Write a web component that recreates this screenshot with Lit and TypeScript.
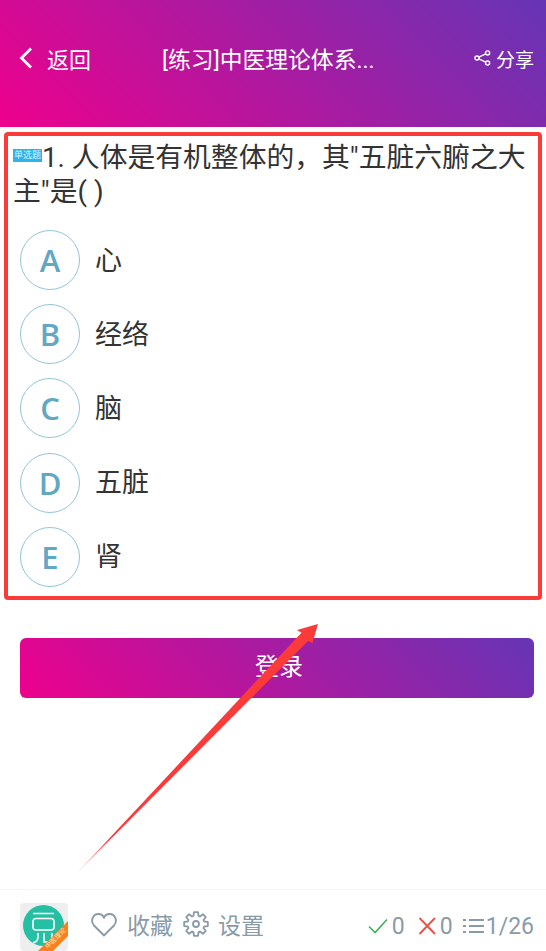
import { LitElement, html, css } from 'lit';
import { customElement } from 'lit/decorators.js';

const OPTIONS = [
  ['A', '心'],
  ['B', '经络'],
  ['C', '脑'],
  ['D', '五脏'],
  ['E', '肾'],
];

// cog outline, 8 teeth
function gearPath(cx: number, cy: number, outer: number, inner: number) {
  const pts: string[] = [];
  for (let i = 0; i < 8; i++) {
    const a = (i * Math.PI) / 4 - Math.PI / 2;
    for (const [off, r] of [
      [-0.3, inner],
      [-0.17, outer],
      [0.17, outer],
      [0.3, inner],
    ]) {
      pts.push(`${(cx + r * Math.cos(a + off)).toFixed(2)} ${(cy + r * Math.sin(a + off)).toFixed(2)}`);
    }
  }
  return `M${pts.join('L')}Z`;
}

@customElement('app-root')
export class AppRoot extends LitElement {
  static styles = css`
    :host {
      display: block;
      position: relative;
      width: 546px;
      height: 951px;
      overflow: hidden;
      background: #fff;
      font-family: Roboto, "Noto Sans CJK SC", sans-serif;
      color: #333;
    }
    .page {
      display: flex;
      flex-direction: column;
      height: 951px;
    }
    .header {
      flex: none;
      height: 127px;
      box-sizing: border-box;
      padding: 0 12px 11px 18px;
      display: flex;
      align-items: center;
      color: #fff;
      background: linear-gradient(45deg, #ee008c, #6535b5);
    }
    .back {
      display: flex;
      align-items: center;
      gap: 13px;
      width: 144px;
      font-size: 22px;
    }
    .title {
      flex: 1;
      font-size: 22.8px;
      white-space: nowrap;
    }
    .share {
      display: flex;
      align-items: center;
      gap: 5px;
      font-size: 19px;
    }
    .question {
      flex: none;
      padding: 14px 13px 0;
      font-size: 27.8px;
      line-height: 34px;
      height: 91px;
      box-sizing: border-box;
    }
    .tag {
      display: inline-block;
      width: 29px;
      height: 13px;
      line-height: 13px;
      font-size: 9px;
      text-align: center;
      color: #d8f1fb;
      background: #2fb4ea;
      vertical-align: 9px;
    }
    .options {
      flex: none;
      display: flex;
      flex-direction: column;
      gap: 14.2px;
      padding: 12px 20px 0;
    }
    .option {
      display: flex;
      align-items: center;
      gap: 15px;
      font-size: 27px;
      line-height: 56px;
      color: #333;
    }
    .option-text {
      padding-top: 1px;
    }
    .letter {
      width: 60px;
      height: 60px;
      box-sizing: border-box;
      border: 1px solid #92c5d6;
      border-radius: 50%;
      display: flex;
      align-items: center;
      justify-content: center;
      font-family: "Open Sans", sans-serif;
      font-weight: 600;
      font-size: 31px;
      line-height: 60px;
      color: #62a8c3;
    }
    .login {
      flex: none;
      margin: 51px 12px 0 20px;
      height: 60px;
      box-sizing: border-box;
      padding: 0 0 7px 4px;
      border-radius: 6px;
      display: flex;
      align-items: center;
      justify-content: center;
      font-size: 24px;
      color: #fff;
      background: linear-gradient(45deg, #ee008c, #6535b5);
    }
    .footer {
      margin-top: auto;
      flex: none;
      height: 62px;
      box-sizing: border-box;
      border-top: 1px solid #f6f6f6;
      padding: 13px 12px 0 20px;
      display: flex;
      align-items: flex-start;
      color: #8a9ba8;
      font-size: 23px;
    }
    .logo {
      flex: none;
      display: block;
      margin-right: 22px;
    }
    .tool {
      display: flex;
      align-items: center;
      height: 48px;
      margin-top: -3px;
    }
    .fav {
      gap: 9px;
      margin-right: 10px;
    }
    .set {
      gap: 9px;
    }
    .stats {
      margin-left: auto;
      margin-top: -1px;
      font-size: 23px;
    }
    .stats svg {
      margin-right: 4px;
    }
    .stats svg.list {
      margin-right: 2px;
    }
    .stats .right {
      margin-right: 13px;
    }
    .stats .wrong {
      margin-right: 10px;
    }
    .mark {
      position: absolute;
      left: 4px;
      top: 132px;
      width: 538px;
      height: 468px;
      box-sizing: border-box;
      border: 4px solid #fb3a3a;
      border-radius: 4px;
      pointer-events: none;
    }
    .arrow {
      position: absolute;
      left: 0;
      top: 600px;
      pointer-events: none;
    }
  `;

  render() {
    return html`
      <div class="page">
        <div class="header">
          <div class="back">
            <svg width="16" height="24" viewBox="0 0 16 24" fill="none" stroke="#fff" stroke-width="2.800">
              <path d="M13 2.500 3.500 12 13 21.500" />
            </svg>
            返回
          </div>
          <div class="title">[练习]中医理论体系...</div>
          <div class="share">
            <svg width="17" height="18" viewBox="0 0 20 20" fill="none" stroke="#fff" stroke-width="1.700">
              <circle cx="16" cy="4" r="2.400" />
              <circle cx="16" cy="16" r="2.400" />
              <circle cx="3.500" cy="10" r="2.400" />
              <path d="M13.900 5.100 5.600 8.900M5.600 11.100l8.300 3.800" />
            </svg>
            分享
          </div>
        </div>
        <div class="question"><span class="tag">单选题</span>1. 人体是有机整体的，其"五脏六腑之大主"是( )</div>
        <div class="options">
          ${OPTIONS.map(
            ([k, v]) => html`<div class="option"><div class="letter">${k}</div><div class="option-text">${v}</div></div>`
          )}
        </div>
        <div class="login">登录</div>
        <div class="footer">
          <svg class="logo" width="48" height="48" viewBox="0 0 48 48">
            <defs>
              <clipPath id="lc"><rect width="48" height="48" rx="4" /></clipPath>
            </defs>
            <g clip-path="url(#lc)">
              <rect width="48" height="48" fill="#eeeeee" />
              <circle cx="23.500" cy="22.500" r="20.500" fill="#25bfa3" />
              <g fill="none" stroke="#fff" stroke-width="1.600">
                <path d="M13 10.500h21M16 15.500h15a3 3 0 0 1 3 3V24a3 3 0 0 1-3 3H16a3 3 0 0 1-3-3v-5.500a3 3 0 0 1 3-3zM18 30v4c0 3-2 5-5 6M24 30v9h5c3 0 3-2 3-5v-4" />
              </g>
              <path d="M18 48 48 18v15L33 48z" fill="#f5821f" />
              <text transform="translate(28 46) rotate(-45)" font-size="6.500" fill="#ffe2bd">中医理论</text>
            </g>
          </svg>
          <div class="tool fav">
            <svg width="28" height="25" viewBox="0 0 26 25" fill="none" stroke="#8a9ba8" stroke-width="1.900">
              <path d="M13 23.500 3 13.500C-1 8.500 2 2 7.500 2 10 2 12 3.500 13 5.500 14 3.500 16 2 18.500 2 24 2 27 8.500 23 13.500z" />
            </svg>
            收藏
          </div>
          <div class="tool set">
            <svg width="26" height="26" viewBox="0 0 26 26" fill="none" stroke="#8a9ba8" stroke-width="1.800" stroke-linejoin="round">
              <circle cx="13" cy="13" r="3" />
              <path d=${gearPath(13, 13, 12, 8.500)} />
            </svg>
            设置
          </div>
          <div class="tool stats">
            <svg width="20" height="16" viewBox="0 0 20 16" fill="none" stroke="#3db553" stroke-width="1.600"><path d="M1 8.500 7 14.500 19 1.500" /></svg>
            <span class="right">0</span>
            <svg width="18" height="18" viewBox="0 0 18 18" fill="none" stroke="#ea4f45" stroke-width="1.800"><path d="M1.500 1 17 17M17 1 1.500 17" /></svg>
            <span class="wrong">0</span>
            <svg class="list" width="21" height="16" viewBox="0 0 21 16" fill="none" stroke="#8a9ba8" stroke-width="2"><path d="M0 2h3M0 8h3M0 14h3M6 2h15M6 8h15M6 14h15" /></svg>
            <span>1/26</span>
          </div>
        </div>
      </div>
      <div class="mark"></div>
      <svg class="arrow" width="546" height="300" viewBox="0 600 546 300">
        <defs>
          <linearGradient id="ag" x1="76" y1="874" x2="112" y2="836" gradientUnits="userSpaceOnUse">
            <stop offset="0" stop-color="#fb3a3a" stop-opacity="0.200" />
            <stop offset="1" stop-color="#fb3a3a" />
          </linearGradient>
        </defs>
        <path d="M75 875 301.500 632.700 297 630 318 624 312.500 643 308 641z" fill="url(#ag)" />
      </svg>
    `;
  }
}
